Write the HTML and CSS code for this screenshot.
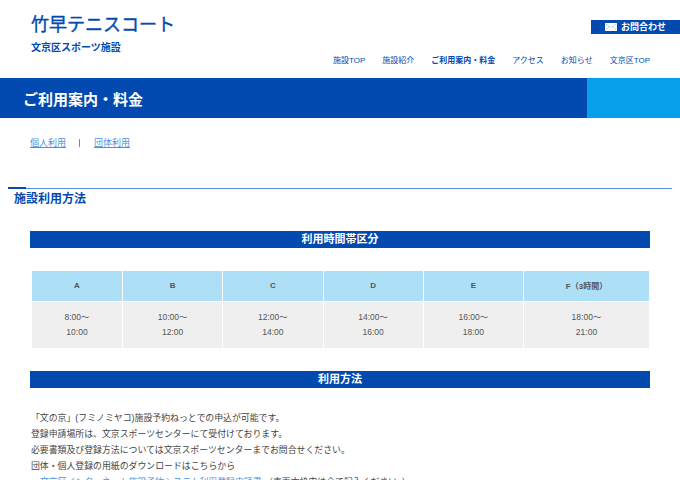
FILE: index.html
```html
<!DOCTYPE html>
<html lang="ja">
<head>
<meta charset="utf-8">
<title>竹早テニスコート</title>
<link rel="stylesheet" href="styles.css">
</head>
<body>
<header class="site-header">
  <div class="brand">
    <div class="site-title">竹早テニスコート</div>
    <div class="site-sub">文京区スポーツ施設</div>
  </div>
  <div class="header-right">
    <a class="contact"><svg class="mail" viewBox="0 0 12 8" width="12" height="8"><rect width="12" height="8" fill="#fff"/><path d="M0.5 0.8 6 4.6 11.5 0.8M0.5 7.4 4.3 3.5M11.5 7.4 7.7 3.5" fill="none" stroke="#9db6e0" stroke-width="0.6"/></svg>お問合わせ</a>
    <nav class="nav">
      <a>施設TOP</a><a>施設紹介</a><a class="current">ご利用案内・料金</a><a>アクセス</a><a>お知らせ</a><a>文京区TOP</a>
    </nav>
  </div>
</header>
<div class="band">
  <h1 class="band-title">ご利用案内・料金</h1>
  <div class="band-accent"></div>
</div>
<div class="tabs">
  <a>個人利用</a><span class="sep"></span><a>団体利用</a>
</div>
<h2 class="section-title">施設利用方法</h2>
<main class="content">
  <h3 class="bar">利用時間帯区分</h3>
  <table class="slots">
    <tr><th class="c1">A</th><th class="c2">B</th><th class="c3">C</th><th class="c4">D</th><th class="c5">E</th><th class="c6">F（3時間）</th></tr>
    <tr><td>8:00～<br>10:00</td><td>10:00～<br>12:00</td><td>12:00～<br>14:00</td><td>14:00～<br>16:00</td><td>16:00～<br>18:00</td><td>18:00～<br>21:00</td></tr>
  </table>
  <h3 class="bar">利用方法</h3>
  <div class="body-text">
    <p>「文の京」(フミノミヤコ)施設予約ねっとでの申込が可能です。</p>
    <p>登録申請場所は、文京スポーツセンターにて受付けております。</p>
    <p>必要書類及び登録方法については文京スポーツセンターまでお問合せください。</p>
    <p>団体・個人登録の用紙のダウンロードはこちらから</p>
    <p class="indent"><a>文京区インターネット施設予約システム利用登録申請書</a> （表面太枠内は全て記入ください。）</p>
  </div>
</main>
</body>
</html>
```
FILE: styles.css
```css
html, body { margin: 0; padding: 0; height: 480px; overflow: hidden; background: #fff; }
body { font-family: "Liberation Sans", "Noto Sans CJK JP", sans-serif; color: #444; width: 680px; }
a { color: inherit; text-decoration: none; }
h1, h2, h3, p { margin: 0; }

.site-header { height: 78px; display: flex; justify-content: space-between; }
.brand { padding: 13px 0 0 31px; color: #034ab0; }
.site-title { font-size: 18px; line-height: 24px; -webkit-text-stroke: 0.4px #034ab0; }
.site-sub { font-size: 10px; line-height: 14px; margin-top: 4px; font-weight: 700; }
.header-right { display: flex; flex-direction: column; align-items: flex-end; }
.contact { margin-top: 20px; width: 89px; height: 14px; background: #034ab0; color: #fff; font-size: 9px; font-weight: 700; line-height: 14px; display: flex; align-items: center; justify-content: center; gap: 4px; }
.nav { margin-top: 20px; padding-right: 30px; display: flex; gap: 17px; font-size: 8px; line-height: 14px; color: #034ab0; }
.nav .current { font-weight: 700; }

.band { height: 40px; display: flex; background: #034ab0; }
.band-title { flex: 1; color: #fff; font-size: 15px; font-weight: 700; line-height: 43px; padding-left: 23px; }
.band-accent { width: 93px; background: #06a0ea; }

.tabs { height: 70px; padding: 18px 0 0 30px; box-sizing: border-box; display: flex; font-size: 9px; line-height: 14px; color: #4a90e2; }
.tabs a { text-decoration: underline; }
.sep { width: 1px; height: 8px; background: #888; margin: 3px 14px 0 13px; }

.section-title { margin: 0 8px; height: 43px; box-sizing: border-box; border-top: 1px solid #5a8ee6; padding: 1px 0 0 6px; font-size: 12px; line-height: 19px; color: #034ab0; font-weight: 700; position: relative; }
.section-title::before { content: ""; position: absolute; left: 0; top: -2px; width: 18px; height: 2px; background: #034ab0; }

.content { padding: 0 30px; }
.bar { height: 17px; background: #034ab0; color: #fff; font-size: 11px; font-weight: 700; line-height: 17px; text-align: center; }

.slots { margin: 22px 0 22px 1px; width: 619px; border-collapse: separate; border-spacing: 1px; table-layout: fixed; }
.slots th { height: 30px; padding: 0 0 2px; box-sizing: border-box; background: #addff6; font-size: 8px; font-weight: 700; color: #555; }
.slots td { height: 46px; padding: 0; background: #efefef; font-size: 8.5px; line-height: 15px; text-align: center; color: #555; }
.c1 { width: 90px; } .c2, .c3, .c4, .c5 { width: 99.25px; } .c6 { width: 125px; }

.body-text { margin-top: 22px; padding-left: 1px; font-size: 8.9px; line-height: 16px; color: #444; }
.indent { padding-left: 9px; }
.indent a { color: #4a90e2; }
```
